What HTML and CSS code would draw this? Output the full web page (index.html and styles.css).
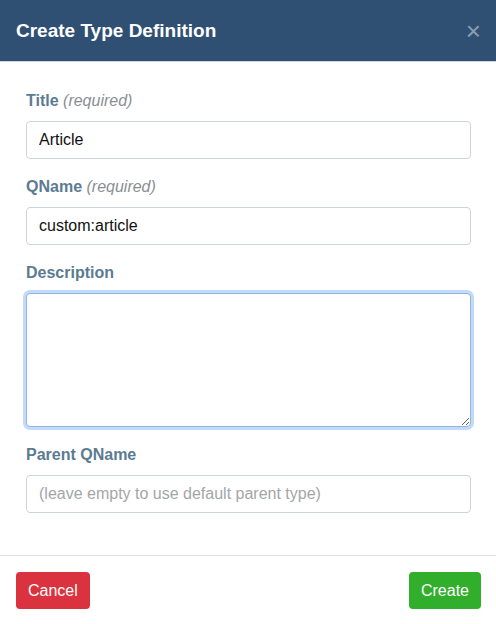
FILE: index.html
```html
<!DOCTYPE html>
<html lang="en">
<head>
  <meta charset="UTF-8">
  <title>Create Type Definition</title>
  <link rel="stylesheet" href="styles.css">
</head>
<body>

  <div class="modal">
    <!-- Cabecalho -->
    <div class="modal-header">
      <h5 class="modal-title">Create Type Definition</h5>
      <span class="close">&times;</span>
    </div>

    <!-- Formulario -->
    <div class="modal-body">
      <div class="form-group">
        <label>Title <em>(required)</em></label>
        <input type="text" class="form-control" value="Article">
      </div>
      <div class="form-group">
        <label>QName <em>(required)</em></label>
        <input type="text" class="form-control" value="custom:article">
      </div>
      <div class="form-group">
        <label>Description</label>
        <textarea class="form-control focused"></textarea>
      </div>
      <div class="form-group">
        <label>Parent QName</label>
        <input type="text" class="form-control" placeholder="(leave empty to use default parent type)">
      </div>
    </div>

    <!-- Rodape -->
    <div class="modal-footer">
      <button class="btn btn-danger">Cancel</button>
      <button class="btn btn-success">Create</button>
    </div>
  </div>

</body>
</html>
```

FILE: styles.css
```css
* {
  box-sizing: border-box;
  font-family: 'Liberation Sans', Arial, sans-serif;
}

body {
  margin: 0;
  padding: 0;
  background: #fff;
}

.modal {
  width: 496px;
  height: 624px;
  display: flex;
  flex-direction: column;
}

.modal-header {
  height: 62px;
  background: #305073;
  border-bottom: 1px solid #c9d6e4;
  display: flex;
  align-items: center;
  justify-content: space-between;
  padding: 0 15px 0 16px;
}

.modal-title {
  margin: 0;
  color: #fff;
  font-size: 19px;
  font-weight: bold;
}

.close {
  color: rgba(255, 255, 255, 0.45);
  font-size: 26px;
  line-height: 1;
  cursor: pointer;
}

.modal-body {
  padding: 28px 25px 25px 26px;
  border-bottom: 1px solid #dee2e6;
}

.form-group {
  margin-bottom: 17px;
}

label {
  display: block;
  font-size: 16px;
  line-height: 22px;
  font-weight: bold;
  color: #5b7b92;
  margin-bottom: 9px;
}

label em {
  font-weight: normal;
  color: #8a8f94;
}

.form-control {
  display: block;
  width: 100%;
  height: 38px;
  padding: 6px 12px;
  font-size: 16px;
  color: #111;
  background: #fff;
  border: 1px solid #ced4da;
  border-radius: 4px;
  outline: none;
}

.form-control::placeholder {
  color: #a3a6a9;
}

textarea.form-control {
  height: 134px;
  resize: vertical;
}

.form-control.focused {
  border-color: #8fb5e6;
  box-shadow: 0 0 0 3px #c3dbf8;
}

.modal-footer {
  flex: 1;
  display: flex;
  justify-content: space-between;
  align-items: flex-start;
  padding: 16px 15px 0 16px;
}

.btn {
  height: 37px;
  padding: 0 12px;
  border: none;
  border-radius: 4px;
  color: #fff;
  font-size: 16px;
  cursor: pointer;
}

.btn-danger {
  background: #db3240;
}

.btn-success {
  background: #31ae2b;
}
```
